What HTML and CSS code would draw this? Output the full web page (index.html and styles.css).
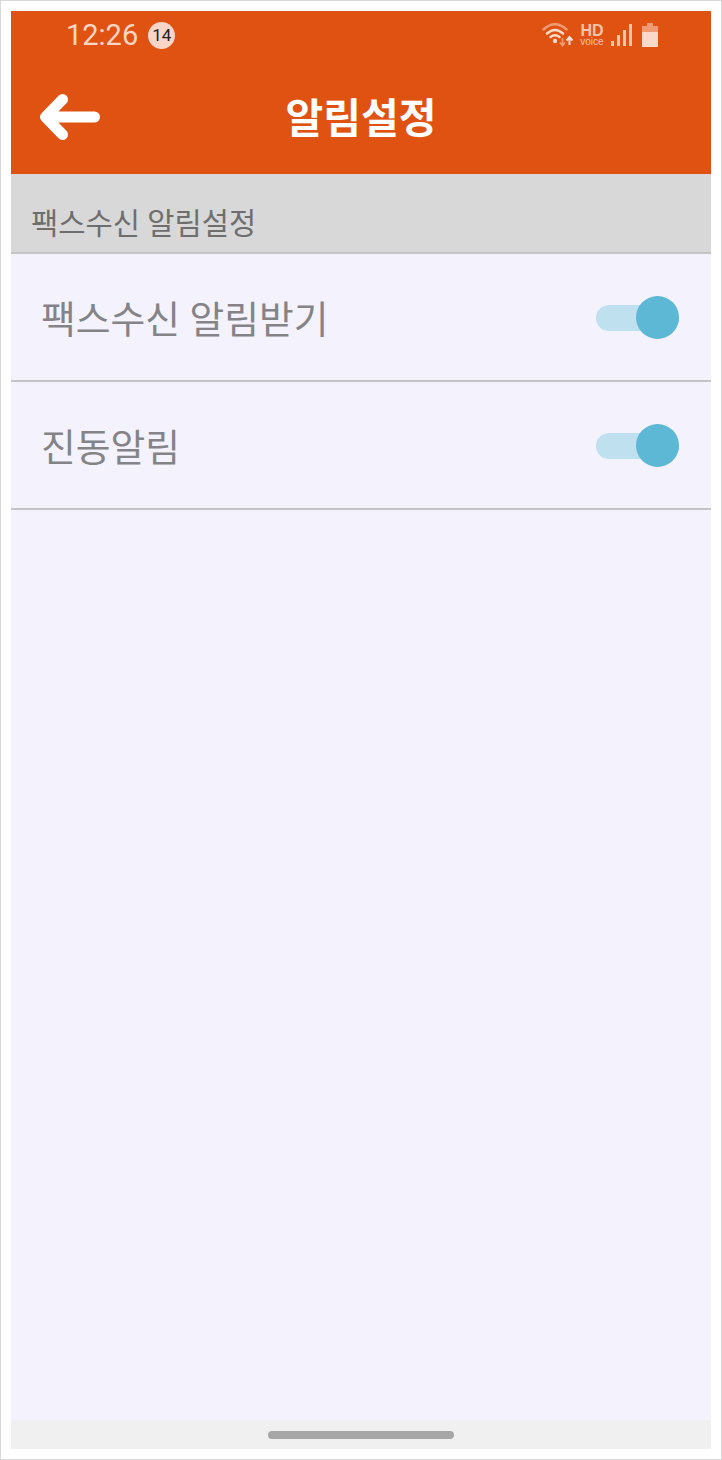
FILE: index.html
```html
<!DOCTYPE html>
<html lang="ko">
<head>
    <meta charset="UTF-8">
    <meta name="viewport" content="width=device-width, initial-scale=1.0">
    <title>알림설정</title>
    <link rel="stylesheet" href="styles.css">
</head>
<body>
    <div class="frame">
        <div class="screen">
            <header class="app-header">
                <div class="status-bar">
                    <div class="status-left">
                        <span class="clock">12:26</span>
                        <span class="badge">14</span>
                    </div>
                    <div class="status-right">
                        <svg class="wifi" width="32" height="24" viewBox="0 0 32 24">
                            <g fill="none" stroke-linecap="round">
                                <path d="M1.500 6.500 Q13 -4 24.500 6.500" stroke="#ee9a74" stroke-width="2.500"/>
                                <path d="M5 10.500 Q13 3.500 21 10.500" stroke="#fbdccd" stroke-width="2.500"/>
                                <path d="M8.500 14 Q13 10.500 17.500 14" stroke="#fbdccd" stroke-width="2.500"/>
                            </g>
                            <circle cx="13" cy="18" r="2.200" fill="#fbdccd"/>
                            <path d="M20.500 15v7M18 19.500l2.500 3 2.500-3" fill="none" stroke="#ee9a74" stroke-width="1.800"/>
                            <path d="M27.500 22v-7M24.500 17.500l3-3.500 3 3.500" fill="none" stroke="#fbe0d3" stroke-width="2"/>
                        </svg>
                        <div class="hd">
                            <span class="hd-big">HD</span>
                            <span class="hd-small">voice</span>
                        </div>
                        <svg class="signal" width="21" height="22" viewBox="0 0 21 22">
                            <rect x="0" y="17" width="3" height="5" fill="#f7c4ac"/>
                            <rect x="6" y="11" width="3" height="11" fill="#f7c4ac"/>
                            <rect x="12" y="6" width="3" height="16" fill="#f7c4ac"/>
                            <rect x="18" y="0" width="3" height="22" fill="#f7c4ac"/>
                        </svg>
                        <svg class="battery" width="16" height="24" viewBox="0 0 16 24">
                            <rect x="5" y="0" width="6" height="3" fill="#ee9a74"/>
                            <rect x="0" y="3" width="16" height="6" fill="#ee9a74"/>
                            <rect x="0" y="9" width="16" height="15" fill="#fbd9c8"/>
                        </svg>
                    </div>
                </div>
                <div class="toolbar">
                    <button class="back-btn" aria-label="뒤로">
                        <svg width="60" height="46" viewBox="0 0 60 46">
                            <path d="M54.500 23H6M22.500 5.500L5.500 23l17 17.500" fill="none" stroke="#fff" stroke-width="11" stroke-linecap="round" stroke-linejoin="round"/>
                        </svg>
                    </button>
                    <h1 class="title">알림설정</h1>
                </div>
            </header>

            <div class="section-head">팩스수신 알림설정</div>

            <div class="setting-row">
                <span class="setting-label">팩스수신 알림받기</span>
                <div class="toggle"><div class="toggle-knob"></div></div>
            </div>
            <div class="setting-row">
                <span class="setting-label">진동알림</span>
                <div class="toggle"><div class="toggle-knob"></div></div>
            </div>

            <div class="spacer"></div>

            <div class="nav-bar"><div class="home-pill"></div></div>
        </div>
    </div>
</body>
</html>
```

FILE: styles.css
```css
* {
    box-sizing: border-box;
}
body {
    margin: 0;
    background-color: #fff;
    font-family: Roboto, "Noto Sans CJK KR", sans-serif;
}
.frame {
    width: 722px;
    height: 1460px;
    padding: 10px;
    border: 1px solid #d8d8d8;
}
.screen {
    display: flex;
    flex-direction: column;
    height: 1438px;
    background-color: #f4f3fd;
}
.app-header {
    height: 163px;
    background-color: #e05212;
    color: #fff;
}
.status-bar {
    display: flex;
    justify-content: space-between;
    align-items: center;
    height: 48px;
    padding: 0 53px 0 55px;
}
.status-left {
    display: flex;
    align-items: center;
    gap: 10px;
}
.clock {
    font-size: 29px;
    color: #f9d5c4;
}
.badge {
    display: flex;
    justify-content: center;
    align-items: center;
    width: 27px;
    height: 27px;
    border-radius: 50%;
    background-color: #f8d5c7;
    color: #222;
    font-size: 17px;
}
.status-right {
    display: flex;
    align-items: center;
}
.hd {
    display: flex;
    flex-direction: column;
    align-items: center;
    width: 24px;
    margin: 0 7px 0 6px;
    color: #f7c4ac;
}
.hd-big {
    font-family: "Liberation Sans", sans-serif;
    font-size: 16px;
    font-weight: 700;
    line-height: 14px;
}
.hd-small {
    font-family: "Liberation Sans", sans-serif;
    font-size: 10px;
    line-height: 8px;
}
.battery {
    margin-left: 10px;
}
.toolbar {
    display: flex;
    align-items: center;
    position: relative;
    height: 115px;
    padding-left: 29px;
}
.back-btn {
    padding: 0;
    border: 0;
    background: none;
    line-height: 0;
}
.title {
    position: absolute;
    left: 0;
    right: 0;
    top: 35px;
    margin: 0;
    font-size: 41px;
    font-weight: 700;
    line-height: 50px;
    text-align: center;
}
.section-head {
    height: 80px;
    padding: 31px 0 0 20px;
    background-color: #d8d8d8;
    border-bottom: 2px solid #c4c4c4;
    color: #6e6e6e;
    font-size: 29.6px;
    line-height: 38px;
}
.setting-row {
    display: flex;
    justify-content: space-between;
    align-items: center;
    height: 128px;
    padding: 2px 32px 0 30px;
    border-bottom: 2px solid #c4c3c8;
}
.setting-label {
    margin-bottom: 4px;
    color: #848488;
    font-size: 37.8px;
}
.toggle {
    position: relative;
    width: 83px;
    height: 26px;
    border-radius: 13px;
    background-color: #bfe0ee;
}
.toggle-knob {
    position: absolute;
    right: 0;
    top: -9px;
    width: 43px;
    height: 43px;
    border-radius: 50%;
    background-color: #5cb8d5;
}
.spacer {
    flex: 1;
}
.nav-bar {
    display: flex;
    justify-content: center;
    align-items: center;
    height: 29px;
    background-color: #f0f0f0;
}
.home-pill {
    width: 186px;
    height: 8px;
    border-radius: 4px;
    background-color: #a6a6a6;
}
```
